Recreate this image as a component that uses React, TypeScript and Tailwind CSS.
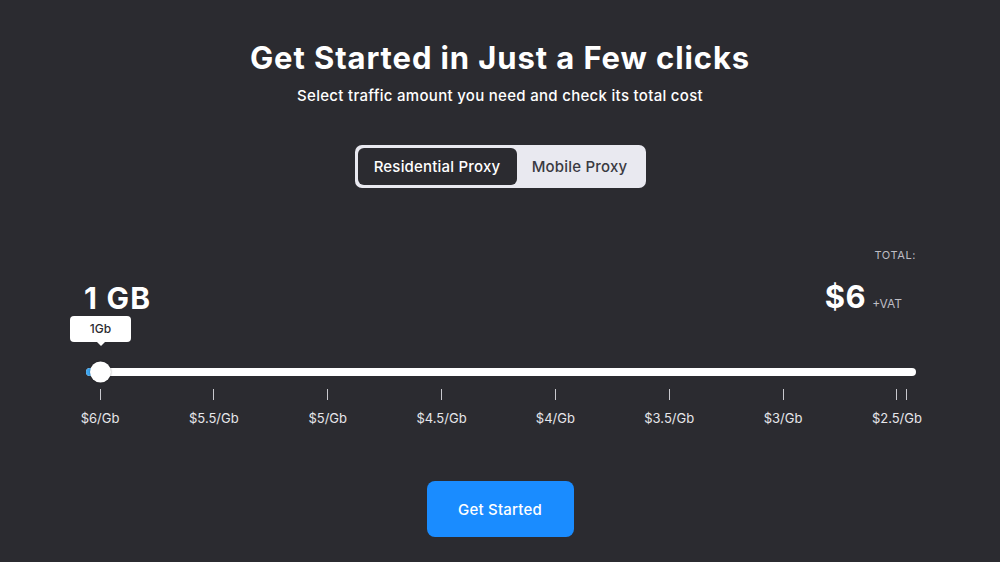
const ticks = ["$6/Gb", "$5.5/Gb", "$5/Gb", "$4.5/Gb", "$4/Gb", "$3.5/Gb", "$3/Gb", "$2.5/Gb"];

export default function App() {
  return (
    <div className="w-[1000px] h-[562px] bg-[#2b2b30] text-white font-['Inter',sans-serif] overflow-hidden">
      <div className="flex flex-col items-center pt-[40px]">
        <h1 className="text-[31px] leading-[36px] font-bold tracking-[0.9px]">Get Started in Just a Few clicks</h1>
        <p className="mt-[10px] text-[15px] leading-[20px] font-medium tracking-[0.3px]">Select traffic amount you need and check its total cost</p>

        <div className="mt-[39px] flex items-center p-[3px] rounded-[7px] bg-[#e9e9f0] w-[291px] h-[43px]">
          <button className="h-full w-[159px] pt-[2px] rounded-[6px] bg-[#2b2b30] text-white text-[15px] font-medium tracking-[0.2px]">Residential Proxy</button>
          <button className="flex-1 h-full pt-[2px] text-[#3a3a42] text-[15px] font-medium tracking-[0.2px]">Mobile Proxy</button>
        </div>
      </div>

      <div className="w-[832px] mx-auto mt-[60px]">
        <div className="flex justify-end text-[11px] leading-[14px] text-[#bdbdc4] tracking-[0.6px]">TOTAL:</div>
        <div className="flex items-end justify-between mt-[17px] h-[36px]">
          <div className="text-[30px] leading-[34px] font-bold tracking-[1.2px]">1 GB</div>
          <div className="flex items-baseline mr-[14px]">
            <span className="text-[31px] leading-[36px] font-bold tracking-[0.5px]">$6</span>
            <span className="ml-[6px] text-[12px] text-[#bdbdc4]">+VAT</span>
          </div>
        </div>

        <div className="mt-[1px] ml-[-14px] flex">
          <div className="relative w-[61px] h-[26px] rounded-[4px] bg-white text-[#2b2b30] text-[12px] font-medium flex items-center justify-center">
            1Gb
            <span className="absolute left-1/2 -bottom-[4px] -translate-x-1/2 w-0 h-0 border-l-[4px] border-r-[4px] border-t-[4px] border-l-transparent border-r-transparent border-t-white" />
          </div>
        </div>

        <div className="relative mt-[26px] ml-[2px] h-[8px] rounded-full bg-white">
          <div className="absolute left-0 top-0 h-full w-[12px] rounded-l-full bg-[#3ea6f0]" />
          <div className="absolute left-[4px] top-1/2 -translate-y-1/2 w-[21px] h-[21px] rounded-full bg-white shadow-[0_0_2px_rgba(0,0,0,0.4)]" />
        </div>

        <div className="flex justify-between ml-[16px] mr-[19px] mt-[13px]">
          {ticks.map((t, i) => (
            <div key={t} className="w-0 flex flex-col items-center">
              <div className="flex gap-[9px]">
                <span className="w-px h-[11px] bg-[#c8c8ce]" />
                {i === ticks.length - 1 && <span className="w-px h-[11px] bg-[#c8c8ce] absolute ml-[10px]" />}
              </div>
              <span className="mt-[10px] text-[13px] leading-[16px] text-[#e6e6ea] whitespace-nowrap">{t}</span>
            </div>
          ))}
        </div>
      </div>

      <div className="flex justify-center mt-[55px]">
        <button className="w-[147px] h-[56px] pt-[2px] rounded-[8px] bg-[#1a8cff] text-white text-[15px] font-medium tracking-[0.2px]">Get Started</button>
      </div>
    </div>
  );
}
